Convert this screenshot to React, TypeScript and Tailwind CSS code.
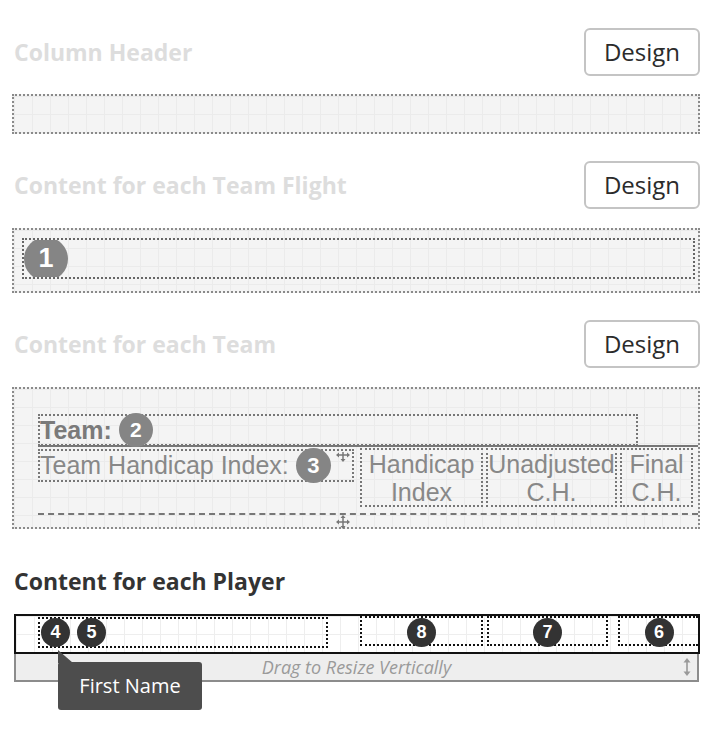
import React from "react";

const grid =
  "bg-[#f4f4f4] bg-[linear-gradient(to_right,#ebebeb_1px,transparent_1px),linear-gradient(to_bottom,#ebebeb_1px,transparent_1px)] bg-[size:18px_18px]";
const gridWhite =
  "bg-white bg-[linear-gradient(to_right,#eeeeee_1px,transparent_1px),linear-gradient(to_bottom,#eeeeee_1px,transparent_1px)] bg-[size:18px_18px]";

const heading = "font-['Open_Sans',sans-serif] font-bold leading-[28px]";

function DesignButton() {
  return (
    <button className="w-[116px] h-[48px] rounded-[6px] border-2 border-[#c4c4c4] bg-white text-[24px] leading-[30px] text-[#2b2b2b] font-['Open_Sans',sans-serif]">
      Design
    </button>
  );
}

function Badge({ n, size, dark }: { n: number; size: number; dark?: boolean }) {
  return (
    <div
      className={
        "shrink-0 rounded-full flex items-center justify-center text-white font-bold font-['Liberation_Sans',Arial,sans-serif] " +
        (dark ? "bg-[#333333]" : "bg-[#858585]")
      }
      style={{ width: size, height: size, fontSize: Math.round(size * 0.62) }}
    >
      {n}
    </div>
  );
}

function MoveIcon({ noTop }: { noTop?: boolean }) {
  return (
    <svg width="14" height="14" viewBox="0 0 14 14" fill="#777">
      <rect x="6.25" y={noTop ? 4 : 2} width="1.5" height={noTop ? 8 : 10} />
      <rect x="2" y="6.25" width="10" height="1.5" />
      {!noTop && <polygon points="7,0 4.5,3 9.5,3" />}
      <polygon points="7,14 4.5,11 9.5,11" />
      <polygon points="0,7 3,4.5 3,9.5" />
      <polygon points="14,7 11,4.5 11,9.5" />
    </svg>
  );
}

function SectionHead({ title }: { title: string }) {
  return (
    <div className="flex items-center justify-between h-[48px]">
      <div className={heading + " text-[23px] text-[#dddddd] pl-[2px]"}>{title}</div>
      <DesignButton />
    </div>
  );
}

const cellText = "font-['Liberation_Sans',Arial,sans-serif] text-[25px] leading-[28px] text-[#888888] text-center";
const cellBox = "h-[59px] border-2 border-dotted border-[#777] flex items-center justify-center";

export default function App() {
  return (
    <div className="w-[716px] h-[736px] bg-white pl-[12px] pr-[16px] pt-[28px] overflow-hidden">
      <SectionHead title="Column Header" />
      <div className={"mt-[18px] h-[40px] border-2 border-dotted border-[#8a8a8a] " + grid} />

      <div className="mt-[27px]">
        <SectionHead title="Content for each Team Flight" />
      </div>
      <div className={"mt-[19px] h-[65px] border-2 border-dotted border-[#8a8a8a] pl-[8px] pr-[3px] pt-[8px] " + grid}>
        <div className="h-[41px] border-2 border-dotted border-[#666] overflow-hidden flex items-center">
          <Badge n={1} size={44} />
        </div>
      </div>

      <div className="mt-[27px]">
        <SectionHead title="Content for each Team" />
      </div>
      <div className={"mt-[19px] h-[142px] border-2 border-dotted border-[#8a8a8a] relative pl-[24px] pt-[25px] " + grid}>
        <div className="w-[600px] h-[32px] border-2 border-dotted border-[#777] flex items-center">
          <span className="font-['Liberation_Sans',Arial,sans-serif] font-bold text-[25px] text-[#7a7a7a] leading-none">
            Team:
          </span>
          <div className="ml-[7px]">
            <Badge n={2} size={34} />
          </div>
        </div>
        <div className="h-[2px] bg-[#777] mt-[-1px]" />
        <div className="flex items-start mt-[1px]">
          <div className="w-[316px] h-[33px] mt-[1px] border-2 border-dotted border-[#777] flex items-center">
            <span className="font-['Liberation_Sans',Arial,sans-serif] text-[25px] text-[#888] leading-none whitespace-nowrap">
              Team Handicap Index:
            </span>
            <div className="ml-[7px]">
              <Badge n={3} size={35} />
            </div>
          </div>
          <div className={cellBox + " ml-[6px] w-[123px]"}>
            <div className={cellText}>
              Handicap
              <br />
              Index
            </div>
          </div>
          <div className={cellBox + " ml-[3px] w-[131px]"}>
            <div className={cellText}>
              Unadjusted
              <br />
              C.H.
            </div>
          </div>
          <div className={cellBox + " ml-[3px] w-[73px]"}>
            <div className={cellText}>
              Final
              <br />
              C.H.
            </div>
          </div>
        </div>
        <div className="mt-[6px] border-t-2 border-dashed border-[#777]" />
        <div className="absolute left-[322px] top-[59px]">
          <MoveIcon noTop />
        </div>
        <div className="absolute left-[322px] top-[126px]">
          <MoveIcon />
        </div>
      </div>

      <div className="mt-[38px] relative">
        <div className={heading + " text-[#333] text-[23px] pl-[2px] h-[25px] leading-[25px]"}>Content for each Player</div>
        <div className={"mt-[22px] ml-[2px] w-[686px] h-[40px] border-2 border-[#111] flex items-start pl-[22px] " + gridWhite}>
          <div className="w-[290px] h-[31px] mt-[1px] border-2 border-dotted border-[#111] flex items-center gap-[7px] pl-[1px]">
            <Badge n={4} size={29} dark />
            <Badge n={5} size={29} dark />
          </div>
          <div className="ml-[32px] w-[123px] h-[30px] border-2 border-dotted border-[#111] flex justify-center">
            <Badge n={8} size={29} dark />
          </div>
          <div className="ml-[4px] w-[121px] h-[30px] border-2 border-dotted border-[#111] flex justify-center">
            <Badge n={7} size={29} dark />
          </div>
          <div className="ml-[10px] flex-1 h-[30px] border-2 border-r-0 border-dotted border-[#111] flex justify-center">
            <Badge n={6} size={29} dark />
          </div>
        </div>
        <div className="ml-[2px] w-[685px] h-[28px] bg-[#eeeeee] border-2 border-t-0 border-[#8c8c8c] relative flex items-center justify-center">
          <span className="font-['Open_Sans',sans-serif] italic text-[18px] leading-[24px] text-[#9a9a9a]">Drag to Resize Vertically</span>
          <svg className="absolute right-[6px] top-[4px]" width="8" height="18" viewBox="0 0 8 18" fill="#999">
            <rect x="3.2" y="3" width="1.6" height="12" />
            <polygon points="4,0 0.5,4.5 7.5,4.5" />
            <polygon points="4,18 0.5,13.5 7.5,13.5" />
          </svg>
        </div>
        <div className="absolute left-[46px] top-[83px] w-0 h-0 border-r-[15px] border-r-transparent border-b-[13px] border-b-[#4d4d4d]" />
        <div className="absolute left-[46px] top-[95px] w-[144px] h-[48px] bg-[#4d4d4d] rounded-[3px] flex items-center justify-center">
          <span className="font-['Open_Sans',sans-serif] text-[20px] text-white">First Name</span>
        </div>
      </div>
    </div>
  );
}
